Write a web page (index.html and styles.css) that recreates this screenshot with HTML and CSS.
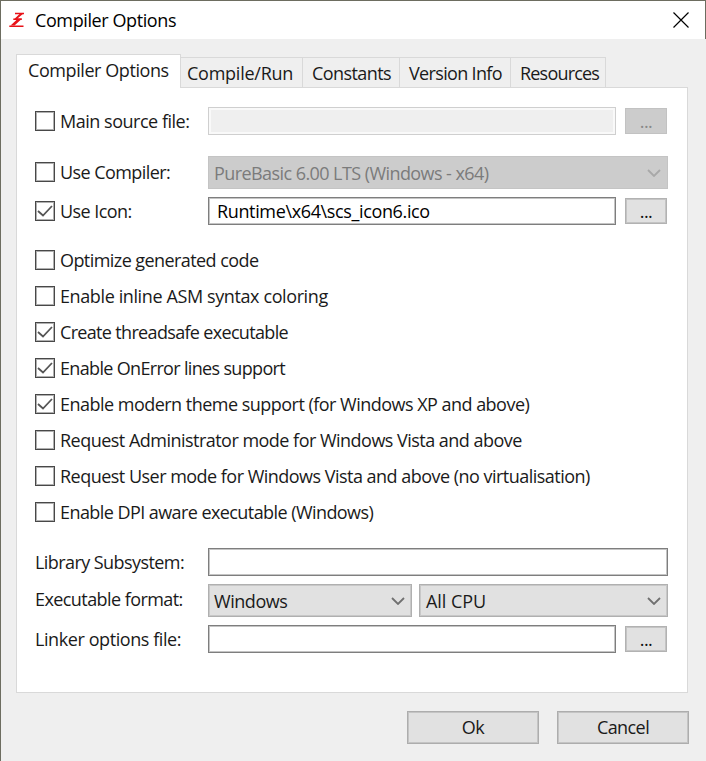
FILE: index.html
```html
<!DOCTYPE html>
<html lang="en">
<head>
<meta charset="utf-8">
<title>Compiler Options</title>
<link rel="stylesheet" href="styles.css">
</head>
<body>
<div class="window">
  <header class="titlebar">
    <svg class="logo" width="16" height="16" viewBox="0 0 16 16"><path fill="none" stroke="#e81218" stroke-width="1.500" d="M6 1.500H15M4.300 7.200H12.800M.3 14.200H14.500"/><path fill="#e81218" d="M11.500 1H15L8.500 6.600H13L11.500 8L5.500 13.600H1.500L8 7.600H4.800Z"/></svg>
    <h1 class="title"><span>Compiler Options</span></h1>
    <svg class="close" width="16" height="16" viewBox="0 0 16 16"><path d="M.5 .5L15.500 15.500M15.500 .5L.5 15.500" stroke="#000" stroke-width="1.200"/></svg>
  </header>
  <nav class="tabs">
    <div class="tab active"><span>Compiler Options</span></div>
    <div class="tab t2"><span>Compile/Run</span></div>
    <div class="tab t3"><span>Constants</span></div>
    <div class="tab t4"><span>Version Info</span></div>
    <div class="tab t5"><span>Resources</span></div>
  </nav>
  <main class="panel">
    <div class="row main-source"><div class="label"><i class="box"></i><span>Main source file:</span></div><div class="input disabled"></div><div class="browse disabled">...</div></div>
    <div class="row compiler"><div class="label"><i class="box"></i><span>Use Compiler:</span></div><div class="select disabled"><span>PureBasic 6.00 LTS (Windows - x64)</span><svg class="chev" width="14" height="8" viewBox="0 0 14 8"><path d="M1 1L7 7L13 1"/></svg></div></div>
    <div class="row icon"><div class="label"><i class="box"><svg width="20" height="20" viewBox="0 0 20 20"><path d="M3 10L8 14.500L17 5"/></svg></i><span>Use Icon:</span></div><div class="input"><span>Runtime\x64\scs_icon6.ico</span></div><div class="browse">...</div></div>
    <div class="checks">
      <div class="label"><i class="box"></i><span>Optimize generated code</span></div>
      <div class="label wider"><i class="box"></i><span>Enable inline ASM syntax coloring</span></div>
      <div class="label tight"><i class="box"><svg width="20" height="20" viewBox="0 0 20 20"><path d="M3 10L8 14.500L17 5"/></svg></i><span>Create threadsafe executable</span></div>
      <div class="label tight"><i class="box"><svg width="20" height="20" viewBox="0 0 20 20"><path d="M3 10L8 14.500L17 5"/></svg></i><span>Enable OnError lines support</span></div>
      <div class="label loose"><i class="box"><svg width="20" height="20" viewBox="0 0 20 20"><path d="M3 10L8 14.500L17 5"/></svg></i><span>Enable modern theme support (for Windows XP and above)</span></div>
      <div class="label loose"><i class="box"></i><span>Request Administrator mode for Windows Vista and above</span></div>
      <div class="label loose"><i class="box"></i><span>Request User mode for Windows Vista and above (no virtualisation)</span></div>
      <div class="label"><i class="box"></i><span>Enable DPI aware executable (Windows)</span></div>
    </div>
    <div class="row library"><div class="label"><span>Library Subsystem:</span></div><div class="input wide"></div></div>
    <div class="row format"><div class="label"><span>Executable format:</span></div><div class="select os"><span>Windows</span><svg class="chev" width="14" height="8" viewBox="0 0 14 8"><path d="M1 1L7 7L13 1"/></svg></div><div class="select cpu"><span>All CPU</span><svg class="chev" width="14" height="8" viewBox="0 0 14 8"><path d="M1 1L7 7L13 1"/></svg></div></div>
    <div class="row linker"><div class="label"><span>Linker options file:</span></div><div class="input"></div><div class="browse">...</div></div>
  </main>
  <footer class="actions"><div class="button"><span>Ok</span></div><div class="button"><span>Cancel</span></div></footer>
</div>
</body>
</html>
```
FILE: styles.css
```css
* { box-sizing: border-box; }
body { margin: 0; font: 18px/24px "Open Sans", "Noto Sans", sans-serif; letter-spacing: -0.57px; color: #1a1a1a; }
span { white-space: nowrap; }
.window { width: 706px; height: 761px; background: #efefef; border-left: 1px solid #6d6d60; border-top: 1px solid #6d6d60; overflow: hidden; }
.titlebar { height: 38px; background: #fff; border-right: 1px solid #6d6d60; display: flex; align-items: center; padding: 0 16px 0 8px; }
.title { margin: 0 0 0 10px; font-size: 18px; font-weight: 400; flex: 1; color: #000; letter-spacing: -0.4px; }
.tabs { display: flex; align-items: flex-end; height: 49px; padding-left: 15px; margin-bottom: -1px; position: relative; }
.tab { height: 31px; border: 1px solid #d9d9d9; border-left: 0; padding: 3px 0 0 8px; background: #efefef; }
.tab.active { width: 165px; height: 34px; border-left: 1px solid #d9d9d9; border-bottom: 0; background: #fff; padding: 3px 0 0 11px; letter-spacing: -0.42px; }
.t2 { width: 122px; padding-left: 6px; letter-spacing: -0.25px; }
.t3 { width: 97px; padding-left: 9px; }
.t4 { width: 111px; padding-left: 9px; letter-spacing: -0.66px; }
.t5 { width: 95px; padding-left: 9px; letter-spacing: -0.8px; }
.panel { width: 672px; height: 606px; margin-left: 15px; border: 1px solid #d9d9d9; background: #fff; padding: 19px 18px 0; }
.row { display: flex; align-items: center; height: 28px; }
.row > .label { width: 173px; }
.label { display: flex; align-items: center; height: 24px; gap: 5px; }
.main-source .label { letter-spacing: -0.48px; }
.wider { letter-spacing: -0.39px; }
.loose { letter-spacing: -0.52px; }
.tight { letter-spacing: -0.67px; }
.box { width: 20px; height: 20px; border: 1px solid #484848; box-shadow: inset 0 0 0 1px #b0b0b0; background: #fff; flex: none; }
.box svg { display: block; margin: -1px; }
.box path { fill: none; stroke: #555; stroke-width: 1.8; }
.input { width: 408px; height: 28px; border: 1px solid #7e7e7e; box-shadow: inset 0 0 0 1px #c4c4c4; padding: 1px 8px; line-height: 24px; color: #000; letter-spacing: -0.36px; }
.input.wide { width: 460px; }
.input.disabled { border-color: #cfcfcf; background: #efefef; box-shadow: inset 0 0 0 2px #f9f9f9; }
.browse { width: 42px; height: 26px; margin-left: 9px; border: 1px solid #b2b2b2; box-shadow: inset 0 0 0 1px #c4c4c4; background: #e1e1e1; text-align: center; line-height: 24px; color: #111; }
.browse.disabled { background: #ccc; border-color: #c2c2c2; box-shadow: none; color: #888; }
.select { height: 33px; border: 1px solid #b0b0b0; box-shadow: inset 0 0 0 1px #c8c8c8; background: #e1e1e1; display: flex; align-items: center; justify-content: space-between; padding: 1px 6px 0 5px; }
.select.disabled { width: 460px; background: #ccc; border-color: #c4c4c4; box-shadow: none; color: #7b7b7b; }
.os { width: 204px; letter-spacing: -0.45px; }
.cpu { width: 249px; margin-left: 7px; padding-left: 6px; letter-spacing: -0.05px; }
.chev path { fill: none; stroke: #707070; stroke-width: 1.8; }
.disabled .chev path { stroke: #a8a8a8; }
.compiler { margin-top: 21px; height: 33px; }
.compiler .label { margin-top: -2px; }
.icon { margin-top: 8px; }
.checks { margin-top: 23px; display: grid; gap: 12px; }
.library { margin-top: 24px; }
.format { margin-top: 8px; height: 33px; }
.format .label { margin-top: -4px; }
.linker { margin-top: 8px; }
.linker .label { letter-spacing: -0.42px; }
.actions { display: flex; justify-content: flex-end; gap: 18px; padding: 18px 17px 0 0; }
.button { width: 132px; height: 33px; border: 1px solid #adadad; box-shadow: inset 0 0 0 1px #c4c4c4; background: #e1e1e1; text-align: center; line-height: 31px; }
```
